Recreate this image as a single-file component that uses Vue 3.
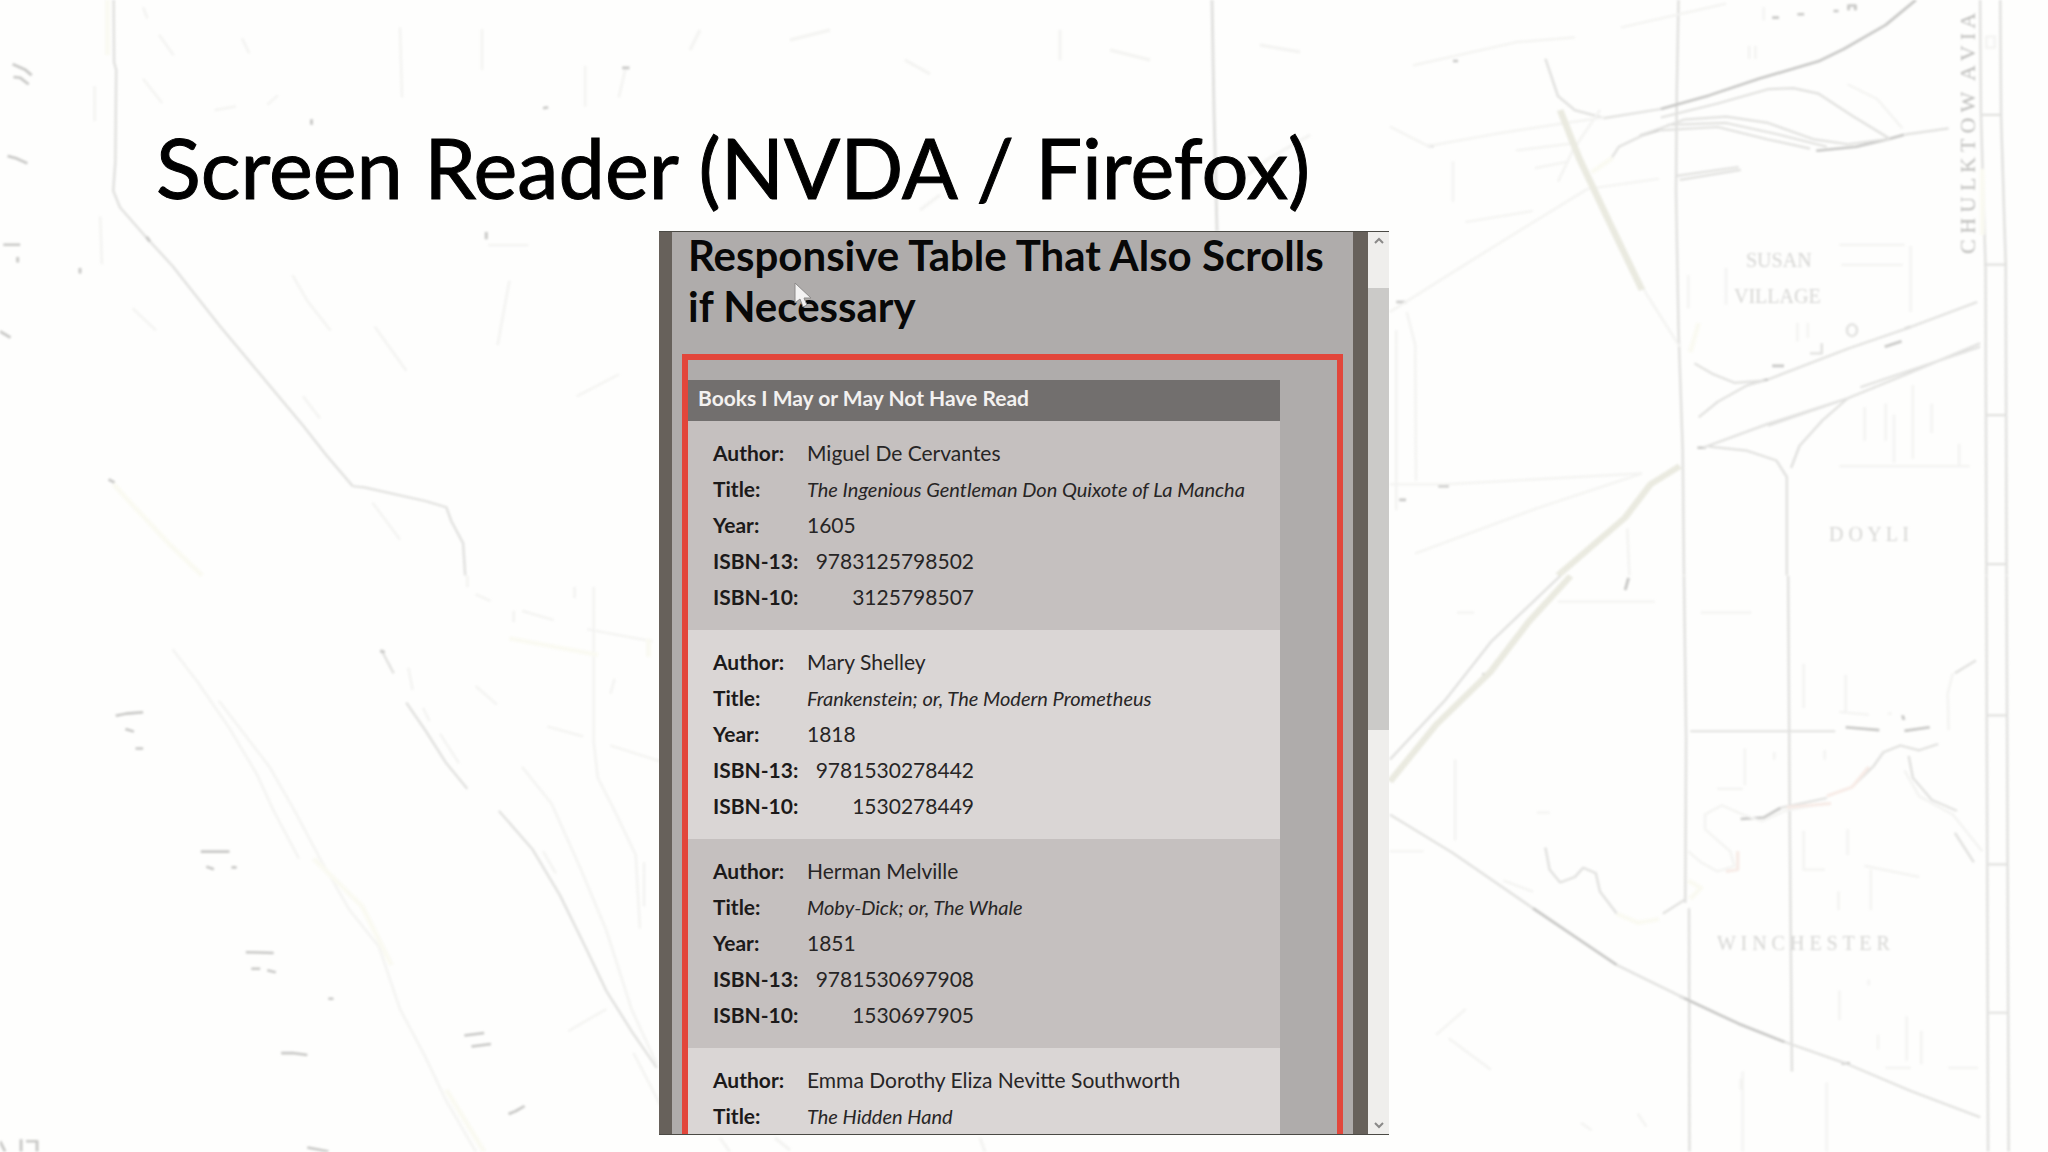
<script setup>
const books = [
  { author: 'Miguel De Cervantes', title: 'The Ingenious Gentleman Don Quixote of La Mancha', year: '1605', isbn13: '9783125798502', isbn10: '3125798507' },
  { author: 'Mary Shelley', title: 'Frankenstein; or, The Modern Prometheus', year: '1818', isbn13: '9781530278442', isbn10: '1530278449' },
  { author: 'Herman Melville', title: 'Moby-Dick; or, The Whale', year: '1851', isbn13: '9781530697908', isbn10: '1530697905' },
  { author: 'Emma Dorothy Eliza Nevitte Southworth', title: 'The Hidden Hand' },
]

const fields = [
  { key: 'author', label: 'Author:' },
  { key: 'title', label: 'Title:' },
  { key: 'year', label: 'Year:' },
  { key: 'isbn13', label: 'ISBN-13:' },
  { key: 'isbn10', label: 'ISBN-10:' },
]

const fieldsOf = (book) => fields.filter((field) => book[field.key])
</script>

<template>
  <main class="slide">
    <svg class="map" viewBox="0 0 2048 1152" preserveAspectRatio="xMidYMid slice" aria-hidden="true">
      <!-- north-west -->
      <g transform="scale(0.421 0.367)" class="ink">
        <path class="mid" d="M270 0L271 170L276 190L274 440L269 520L285 565L350 650L410 725L520 885L640 1050L720 1160L775 1240L838 1325" />
        <path d="M225 235V330M238 590L242 720M340 20L350 50M378 95L412 150M575 105L592 145M950 75L955 265M1145 80V190M1390 180V290M1485 190L1470 265M340 215L385 280M510 300L560 290M635 285L660 260M1160 668H1255M1210 765L1182 940M890 890L965 1010M695 750L730 820L785 900M1470 1020L1370 1080M315 840L370 900M720 1080L760 1140M885 1370L950 1470" />
        <path class="mid" d="M838 1325L865 1328L1010 1365L1060 1382L1072 1420L1100 1480L1105 1568" />
        <path class="dark" d="M30 175L60 190L75 205M32 210L48 212L68 230M18 425L40 432L65 445M8 667H48M42 700V715M0 903L25 920M1155 632V652M740 325V340M348 645L356 658M190 730V745M1290 295L1302 292M1478 185H1495M258 1306L272 1315" />
        <path class="tint" d="M255 0V150M270 1320L310 1370L400 1480L480 1568" />
      </g>
      <!-- south-west -->
      <g transform="translate(0 576) scale(0.421 0.367)" class="ink">
        <path d="M410 200L470 290L545 415L610 540L650 640L710 770M520 340L640 520L700 640L760 770L830 910L900 1010L950 1180L1010 1310L1060 1430L1130 1568" />
        <path class="mid" d="M905 200L935 265M965 345L1010 420L1060 510L1110 580M1185 640L1265 745L1330 870L1390 1010L1440 1130L1500 1240L1560 1340" />
        <path d="M970 250L980 310M1005 360L1020 395M1045 430L1090 510M1290 750L1320 810M1130 300L1180 350M1300 410L1385 437M1450 462L1568 505M1410 30V450L1420 550L1460 640L1510 760L1520 960M1240 95L1315 120M1395 145L1550 178M1240 520L1310 620L1380 800L1440 965L1500 1180L1560 1330M1530 780V900M1365 30V60M1460 280L1450 320M1110 0V30M1220 95V125M1130 50L1165 68M1440 1180L1350 1240M1505 1300L1568 1440" />
        <path class="dark" d="M275 381L300 375L340 371M298 417L318 424M322 470H340M477 751H545M490 792L508 799M550 794H562M584 1025L650 1027M597 1070H618M635 1074L655 1080M668 1300L695 1300L730 1305M1103 1252L1150 1245M1120 1282L1166 1275M1208 1466L1225 1458L1246 1444M730 1557L780 1568M780 1152H792M903 205L914 207M0 1540L12 1568M50 1535V1568M62 1540H88V1568" />
        <path class="tint" d="M745 770L860 900L930 1060M1060 1400L1150 1568M1210 170L1420 215M1540 170V220" />
      </g>
      <!-- north-east -->
      <g transform="translate(1390 0) scale(0.42 0.367)" class="ink">
        <path class="mid" d="M687 0L683 240L681 520L687 900L697 1230L700 1568M1405 0L1407 310L1418 730L1420 1568M1453 0L1455 320L1466 720L1468 1568M1407 313H1455M1414 721H1466M1419 1131H1468M1420 1537H1468" />
        <path class="dark" d="M645 297L760 260L880 214L1020 167L1080 134L1180 68L1252 0M595 370L640 354M1015 411L1110 400L1190 378L1224 367M887 1037L900 1034M910 997H938M1178 945L1218 930M732 1220H752M115 1325H140M22 1362H38M15 823H40M90 398H104M150 166H162M1226 896L1240 890M1056 30H1068M970 39H986M910 48H926M1092 28V15H1108V28" />
        <path class="mid" d="M645 320L780 282L900 243L960 240L1020 255L1100 315L1190 378M595 370L700 326L800 318L900 335L1010 380L1090 393L1190 378M640 355L780 346L900 380L1000 405M660 340L800 335L920 365L1040 400M522 440L545 400L600 370M1225 367L1330 350M683 479L830 455M690 490L835 463M900 1034L1090 950L1230 895L1398 823M735 1137L780 1095L850 1050L890 1037L820 1043L770 1020L725 990M745 1220L900 1155L1090 1085L1240 1015L1405 935M900 1160L1090 1085M1120 1055L1405 945M945 1568V1300L920 1255L850 1228L760 1217M955 1275L975 1215L1030 1145L1090 1085M370 160L400 262L440 300L510 322L645 297M1088 900A12 16 0 1 0 1112 900A12 16 0 1 0 1088 900M1000 963H1028V935" />
        <path d="M0 345L90 398L250 365L420 335L510 320M0 850L180 720L320 620L470 515L640 487M55 178L300 115L440 102M550 75L800 10M440 390L520 600L610 800L690 945M300 410L440 390M345 458L425 440M500 300L435 410L400 495M60 1508L350 1385L600 1290M0 1320H130L600 1290M40 850L60 940L62 1310M15 900V1390M565 1440L570 1568M855 125V160M870 125V160M180 605L340 575M1070 667H1225M1240 670V850M800 730V830M710 750V840M1075 722H1220M890 20V55M1070 1270H1380M1130 1110V1200M1200 1130V1260M1245 1050V1250M1180 1100V1200M1290 1100V1180M1355 1210V1270M1090 230L1160 270L1220 350M1420 100H1440V130H1420ZM970 880V930M995 880V920M150 440V550" />
        <path class="road" d="M405 300L450 430L520 600L600 790M690 1270L620 1320L560 1410L400 1568" />
        <path class="tint" d="M735 880L715 960M1410 460V640M480 470L530 430" />
      </g>
      <!-- south-east -->
      <g transform="translate(1390 576) scale(0.42 0.367)" class="ink">
        <path class="mid" d="M700 0L705 440L703 890M712 905L713 1568M1420 0L1424 1568M1468 0L1473 1568M1422 380H1468M1423 786H1471M1425 1190H1472M948 0L952 700L957 1350" />
        <path class="dark" d="M340 905L430 975L540 1060M690 1145L830 1220L940 1270M1075 1328H1095M220 268H232M1085 412L1165 420M1225 422L1285 412M560 38L568 5M1220 380L1224 392M835 662L890 658L930 632" />
        <path class="mid" d="M0 650L150 755L340 905M540 1060L700 1150M940 1270L1085 1328L1240 1403L1405 1475M0 500L130 340L240 180L405 0M715 423H1060M370 740L380 800L405 835L440 820L460 795L490 810L500 860L540 920M650 920L705 880M930 632L1040 605M1100 575L1150 520L1175 480L1215 462L1260 475L1305 458M1235 490L1245 550L1290 610L1350 640M1345 700L1390 780M1345 265L1395 230" />
        <path d="M750 690L750 650L790 625L840 650L885 668L940 640L1040 618M750 690L810 750L820 790L780 805L740 780L710 750M1225 530L1260 600L1340 650L1410 750M1340 265L1328 320L1330 420M845 470V570M780 580H840M1090 690V760M985 695V800H1035M1130 790L1260 820M1145 800V910M1068 860V910M1070 1130V1210M1230 1200V1320M1162 1250V1290M1265 1240V1330M840 1350V1568M1040 1380V1568M740 100H860M1085 270V370M985 240V360M400 70H630M155 500V720M160 100H200M1330 1340H1400M1180 1340H1240M0 750H80M110 1250L180 1180M140 1260L240 1345M590 1465L610 1500M455 1490L480 1510M1185 375H1195M1070 370L1140 378M915 480V500M1035 475V500M350 645H380M270 830L340 860M1140 1100V1115M835 1370V1400" />
        <path class="road" d="M0 560L110 405L240 260L330 125L430 0" />
        <path class="blush" d="M1040 600L1100 575L1140 520M800 805L828 800V750M945 630L1050 620" />
        <path class="tint" d="M540 920L590 945L640 935M710 830L740 850L715 880" />
      </g>
      <!-- centre, above and below the panel -->
      <g class="ink centre">
        <path class="mid" d="M1212 0L1214 110L1217 231" />
        <path d="M700 30L690 50M790 40L830 30M905 60L930 74M1060 30V60M1110 50L1150 60M1260 45L1300 52M1240 180L1270 158L1310 135M940 195L920 210M720 1138L730 1152M775 1138L790 1150M980 1138L985 1152" />
      </g>
      <g class="place">
        <text x="1746" y="267">SUSAN</text>
        <text x="1734" y="303">VILLAGE</text>
        <text x="1829" y="541">D O Y L I</text>
        <text x="1717" y="950">W I N C H E S T E R</text>
        <text class="edge" transform="translate(1975 254) rotate(-90)">C H U L K T O W &#160;A V I A</text>
      </g>
    </svg>

    <h1 class="slide-title">Screen Reader (NVDA / Firefox)</h1>

    <section class="browser">
      <div class="page">
        <h2 class="page-title">Responsive Table That Also Scrolls if&nbsp;Necessary</h2>
        <div class="scroller">
          <table class="books">
            <caption>Books I May or May Not Have Read</caption>
            <tbody v-for="book in books" :key="book.title">
              <tr v-for="field in fieldsOf(book)" :key="field.key">
                <th scope="row">{{ field.label }}</th>
                <td :class="field.key">{{ book[field.key] }}</td>
              </tr>
            </tbody>
          </table>
        </div>
      </div>
      <div class="scrollbar">
        <svg class="arrow" viewBox="0 0 10 8" aria-hidden="true"><path d="M1 6L5 2L9 6" /></svg>
        <div class="track"><div class="thumb"></div></div>
        <svg class="arrow" viewBox="0 0 10 8" aria-hidden="true"><path d="M1 2L5 6L9 2" /></svg>
      </div>
      <svg class="pointer" viewBox="0 0 18 26" aria-hidden="true">
        <path d="M1 1V21L6 17L9 25L13 23L10 16H17Z" />
      </svg>
    </section>
  </main>
</template>

<style>
body {
  margin: 0;
}
</style>

<style scoped>
.slide {
  position: relative;
  display: flex;
  flex-direction: column;
  align-items: center;
  box-sizing: border-box;
  height: 100vh;
  padding: 117px 16px 17px;
  overflow: hidden;
  background: #fefefd;
  font-family: Lato, Carlito, sans-serif;
}

.map {
  position: absolute;
  inset: 0;
  width: 100%;
  height: 100%;
  filter: blur(1px);
}

.ink path {
  fill: none;
  stroke: #f3f3f1;
  stroke-width: 6;
  stroke-linejoin: round;
}

.ink .mid {
  stroke: #e1e1df;
}

.ink .dark {
  stroke: #c8c8c6;
  stroke-width: 7;
}

.ink .road {
  stroke: #eaeae0;
  stroke-width: 16;
}

.ink .tint {
  stroke: #fafaf2;
  stroke-width: 12;
}

.ink .blush {
  stroke: #f7ebe6;
  stroke-width: 8;
}

.ink.centre path {
  stroke-width: 3;
}

.place {
  fill: #d6d6d4;
  font-family: "Liberation Serif", serif;
  font-size: 20px;
}

.place .edge {
  fill: #bcbcba;
  font-size: 22px;
}

.slide-title {
  position: relative;
  align-self: stretch;
  margin: 0;
  padding-left: 140px;
  color: #000;
  font-size: 83px;
  font-weight: 400;
  line-height: 100px;
  white-space: nowrap;
  -webkit-text-stroke: 1px #000;
}

.browser {
  position: relative;
  display: flex;
  flex: 1;
  box-sizing: border-box;
  width: 730px;
  max-width: 100%;
  min-height: 0;
  margin-top: 14px;
  overflow: hidden;
  border-top: 1px solid #4b4a45;
  border-bottom: 1px solid #4b4a45;
}

.page {
  flex: 1;
  min-width: 0;
  padding: 0 10px;
  border: solid #67615b;
  border-width: 0 15px 0 13px;
  background: #afacab;
}

.page-title {
  margin: -2px 0 0;
  padding: 0 0 22px 6px;
  color: #080808;
  font-size: 42px;
  font-weight: 700;
  line-height: 51px;
}

.scroller {
  padding: 20px 57px 20px 0;
  border: 6px solid #e2463b;
}

.books {
  display: block;
  color: #272525;
  font-size: 21px;
  line-height: 36px;
}

.books caption {
  display: block;
  padding: 0 10px 5px;
  background: #726f6e;
  color: #f3f1f0;
  font-weight: 700;
  text-align: left;
}

.books tbody {
  display: block;
  padding: 14px 25px 15px;
  background: #dad6d5;
}

.books tbody:nth-of-type(odd) {
  background: #c5c0bf;
}

.books tr {
  display: flex;
}

.books th {
  flex: none;
  width: 94px;
  padding: 0;
  color: #1c1a1a;
  font-weight: 700;
  text-align: left;
}

.books td {
  padding: 0;
  white-space: nowrap;
}

.books .title {
  font-size: 20px;
  font-style: italic;
}

.books .isbn13,
.books .isbn10 {
  width: 167px;
  text-align: right;
}

.scrollbar {
  display: flex;
  flex: none;
  flex-direction: column;
  align-items: center;
  width: 21px;
  background: #efeeec;
}

.track {
  flex: 1;
  width: 100%;
}

.thumb {
  height: 51%;
  margin-top: 38px;
  background: #cbcac8;
}

.arrow {
  width: 10px;
  height: 8px;
  margin: 5px 0;
  fill: none;
  stroke: #8a8988;
  stroke-width: 2;
}

.pointer {
  position: absolute;
  top: 50px;
  left: 135px;
  width: 18px;
  height: 26px;
  fill: #f4f3f3;
  stroke: #8d8b8a;
}
</style>
